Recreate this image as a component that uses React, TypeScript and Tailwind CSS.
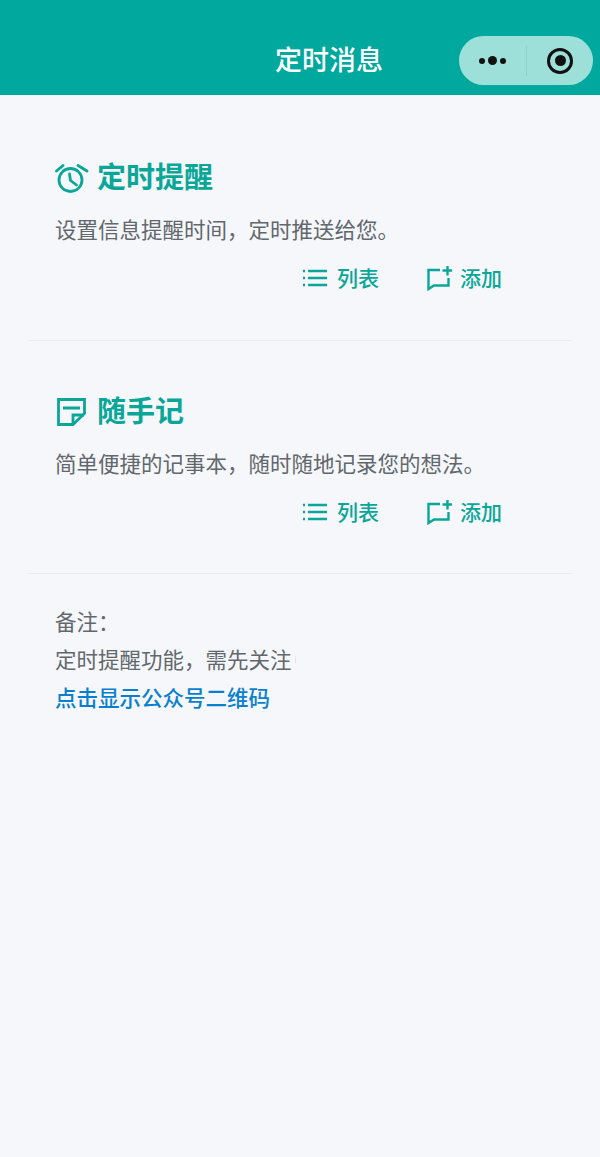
const cjk = { fontFamily: '"Noto Sans CJK SC", "Noto Sans", sans-serif' };

function ClockIcon() {
  return (
    <svg width="34" height="34" viewBox="0 0 34 34" fill="none" stroke="#0aa698" strokeWidth="2.8" strokeLinecap="round" strokeLinejoin="round">
      <circle cx="15.5" cy="21" r="11.5" />
      <path d="M14.5 15L15.5 21.5L21.5 26" />
      <path d="M1.5 12L8 6.5M23 6.5L32 12" />
    </svg>
  );
}

function NoteIcon() {
  return (
    <svg width="34" height="34" viewBox="0 0 34 34" fill="none" stroke="#0aa698" strokeWidth="2.8">
      <path d="M29.5 6.5H3.5V31.5H18L29.5 20.5Z" />
      <path d="M8 15H25M18 31V22H29" />
    </svg>
  );
}

function ListIcon() {
  return (
    <svg width="26" height="20" viewBox="0 0 26 20" fill="none" stroke="#0aa698" strokeWidth="2.3">
      <path d="M6 3H25M6 10H25M6 17H25" />
      <path d="M1 3H3M1 10H3M1 17H3" />
    </svg>
  );
}

function AddIcon() {
  return (
    <svg width="28" height="28" viewBox="0 0 28 28" fill="none" stroke="#0aa698" strokeWidth="2.4">
      <path d="M14 6H2.5V25L8 21.5H22.5V14" />
      <path d="M16.5 6.5H26M21.5 2V11.5" />
    </svg>
  );
}

function Actions() {
  return (
    <div className="flex justify-end items-center h-[30px] mt-[19px] pr-[70px] text-[21px] font-medium text-[#0aa698]">
      <div className="flex items-center gap-[9px] mr-[47px]">
        <ListIcon />
        <span>列表</span>
      </div>
      <div className="flex items-center gap-[6px]">
        <AddIcon />
        <span>添加</span>
      </div>
    </div>
  );
}

function Section(props: { className: string; icon: React.ReactNode; title: string; desc: string }) {
  return (
    <section className={"mx-[28px] border-b border-[#e9ecef] px-[27px] " + props.className}>
      <div className="flex items-center h-[40px] gap-[8px]">
        <div className="w-[34px] flex justify-center">{props.icon}</div>
        <h2 className="text-[29px] font-semibold text-[#0aa698]">{props.title}</h2>
      </div>
      <p className="mt-[18px] text-[21.5px] leading-[30px] text-[#62676c] whitespace-nowrap">{props.desc}</p>
      <div className="-mx-[27px]">
        <Actions />
      </div>
    </section>
  );
}

export default function App() {
  return (
    <div style={cjk} className="w-[600px] h-[1157px] bg-[#f5f7fb] overflow-hidden">
      <header className="relative h-[95px] bg-[#00a89d]">
        <h1 className="absolute left-0 right-0 top-[39px] text-center pl-[58px] text-[27px] leading-[40px] font-medium text-white">
          定时消息
        </h1>
        <div className="absolute left-[459px] top-[36px] w-[134px] h-[49px] rounded-full bg-[#9de0d9] flex items-center">
          <div className="w-[67px] flex justify-center items-center gap-[3px]">
            <span className="w-[6px] h-[6px] rounded-full bg-[#111]" />
            <span className="w-[9px] h-[9px] rounded-full bg-[#111]" />
            <span className="w-[6px] h-[6px] rounded-full bg-[#111]" />
          </div>
          <div className="w-px h-[30px] bg-[#8dd0c9]" />
          <div className="flex-1 flex justify-center">
            <div className="w-[26px] h-[26px] rounded-full border-[3px] border-[#111] flex items-center justify-center">
              <span className="w-[11px] h-[11px] rounded-full bg-[#111]" />
            </div>
          </div>
        </div>
      </header>
      <main className="pt-[11px]">
        <Section className="h-[235px] pt-[50px]" icon={<ClockIcon />} title="定时提醒" desc="设置信息提醒时间，定时推送给您。" />
        <Section className="h-[233px] pt-[49px]" icon={<NoteIcon />} title="随手记" desc="简单便捷的记事本，随时随地记录您的想法。" />
        <div className="px-[55px] pt-[28px] text-[21.5px] leading-[38px] text-[#62676c]">
          <p>备注：</p>
          <p className="flex items-center">
            定时提醒功能，需先关注
            <span className="ml-[3px] w-px h-[7px] bg-[#e4e6ea]" />
          </p>
          <p className="text-[#0a7fd0] font-medium">点击显示公众号二维码</p>
        </div>
      </main>
    </div>
  );
}
